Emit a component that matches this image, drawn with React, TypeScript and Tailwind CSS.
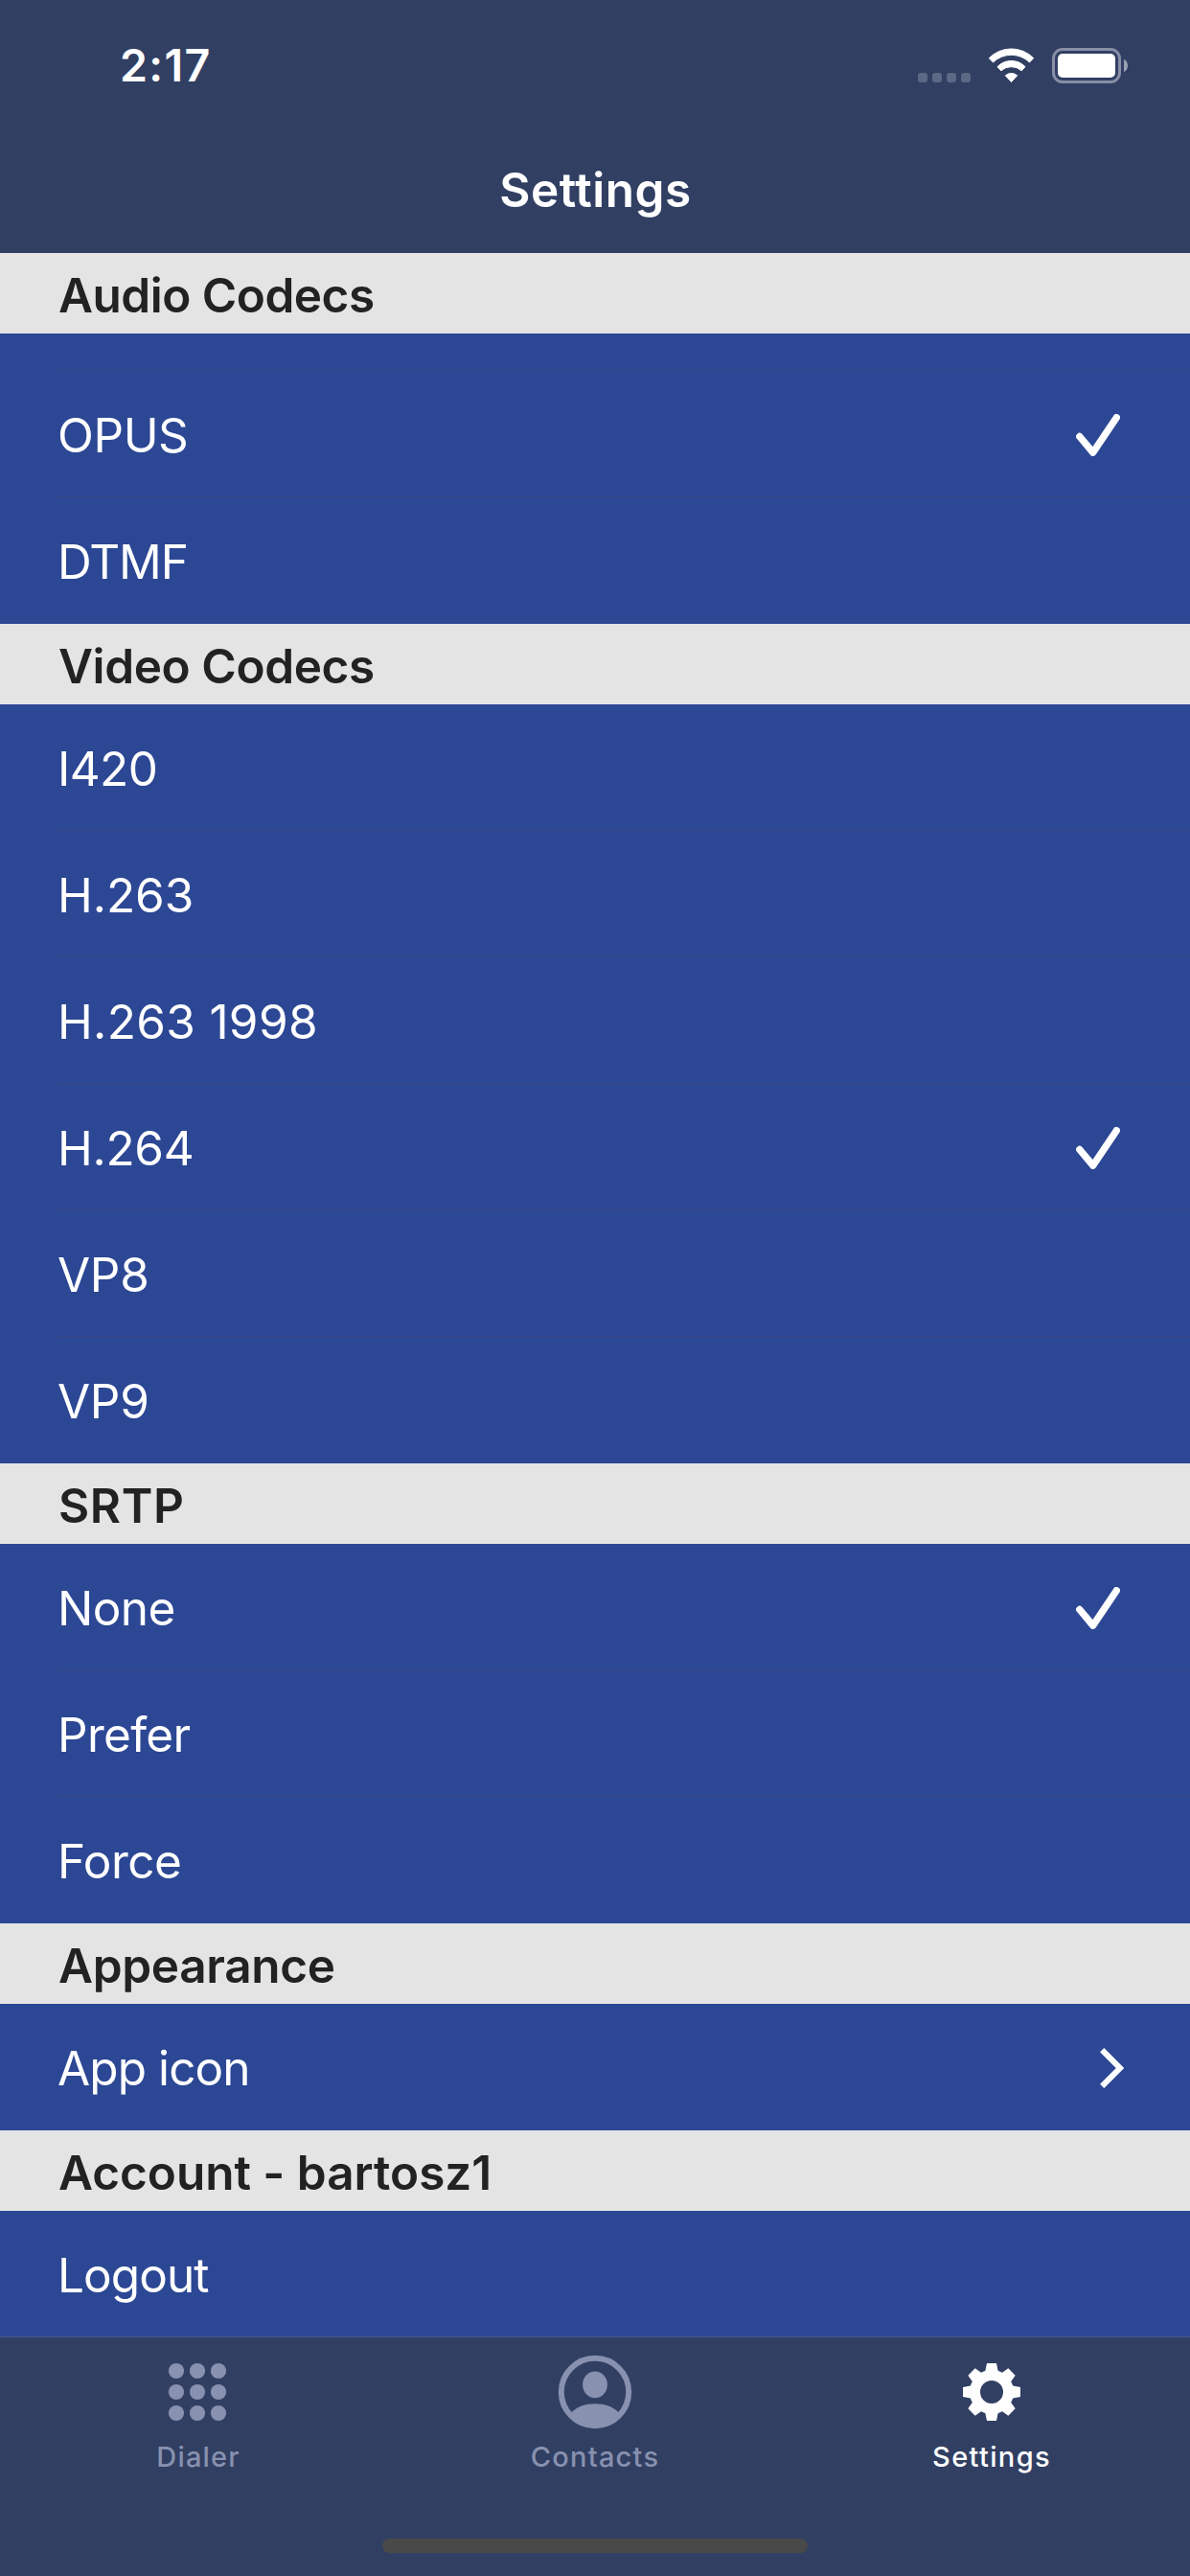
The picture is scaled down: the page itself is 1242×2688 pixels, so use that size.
import type { ReactNode } from "react";

type Accessory = "check" | "chevron";
type Item = { label: string; tracking: string; accessory?: Accessory };
type Section = { title: string; tracking: string; clipped?: boolean; items: Item[] };

const sections: Section[] = [
  {
    title: "Audio Codecs",
    tracking: "tracking-[-0.5px]",
    clipped: true,
    items: [
      { label: "OPUS", tracking: "tracking-[-0.4px]", accessory: "check" },
      { label: "DTMF", tracking: "tracking-[-1.07px]" },
    ],
  },
  {
    title: "Video Codecs",
    tracking: "tracking-[-0.4px]",
    items: [
      { label: "I420", tracking: "tracking-[-0.6px]" },
      { label: "H.263", tracking: "tracking-[-0.05px]" },
      { label: "H.263 1998", tracking: "tracking-[0.33px]" },
      { label: "H.264", tracking: "tracking-[-0.3px]", accessory: "check" },
      { label: "VP8", tracking: "tracking-[-0.3px]" },
      { label: "VP9", tracking: "tracking-[-0.3px]" },
    ],
  },
  {
    title: "SRTP",
    tracking: "tracking-[0.6px]",
    items: [
      { label: "None", tracking: "tracking-[-0.6px]", accessory: "check" },
      { label: "Prefer", tracking: "tracking-[-0.72px]" },
      { label: "Force", tracking: "tracking-[-0.5px]" },
    ],
  },
  {
    title: "Appearance",
    tracking: "tracking-[-0.33px]",
    items: [{ label: "App icon", tracking: "tracking-[-0.9px]", accessory: "chevron" }],
  },
  {
    title: "Account - bartosz1",
    tracking: "tracking-[-0.03px]",
    items: [{ label: "Logout", tracking: "tracking-[-0.95px]" }],
  },
];

function CheckIcon() {
  return (
    <svg className="mr-[73px] h-[44px] w-[46px]" viewBox="0 0 46 44" fill="none">
      <path d="M3.8 23.5 17.7 40.2 42.3 3.7" stroke="white" strokeWidth="7.4" strokeLinecap="round" strokeLinejoin="round" />
    </svg>
  );
}

function ChevronIcon() {
  return (
    <svg className="mr-[69px] h-[42px] w-[25px]" viewBox="0 0 25 42" fill="none">
      <path d="M2.2 2.2 20.9 21 2.2 39.8" stroke="white" strokeWidth="6" />
    </svg>
  );
}

function WifiIcon() {
  return (
    <svg className="h-[37px] w-[49px]" viewBox="627 147 147 111" fill="white" stroke="white" strokeWidth="3" strokeLinejoin="round">
      <path d="M631 179A97.500 97.500 0 0 1 770 179L757.500 192A82 82 0 0 0 643.500 192Z" />
      <path d="M657 206A60 60 0 0 1 744 206L732.500 218.500A47 47 0 0 0 668.500 218.500Z" />
      <path d="M682 233.500A28 28 0 0 1 719 233.500L700.500 253.500Z" />
    </svg>
  );
}

function Battery() {
  return (
    <div className="flex items-center gap-[3px]">
      <div className="h-[37px] w-[72px] rounded-[11px] border-[3px] border-[#878ea5] p-[3px]">
        <div className="h-full w-full rounded-[5px] bg-white" />
      </div>
      <svg className="h-[13px] w-[4px]" viewBox="0 0 4 13" fill="#9ba1b4">
        <path d="M0 0C5.300 2 5.300 11 0 13Z" />
      </svg>
    </div>
  );
}

function DialerIcon() {
  const steps = [30, 52, 74];
  return (
    <svg className="h-[78px] w-[106px]" viewBox="0 0 106 78" fill="#8891af">
      {steps.map((cx) => steps.map((y) => <circle key={`${cx}-${y}`} cx={cx} cy={y - 13} r="8.1" />))}
    </svg>
  );
}

function ContactsIcon() {
  return (
    <svg className="h-[78px] w-[78px]" viewBox="0 0 78 78" fill="#8891af">
      <circle cx="39" cy="39" r="35.2" fill="none" stroke="#8891af" strokeWidth="6" />
      <ellipse cx="39" cy="31.400" rx="12.900" ry="13.900" />
      <path d="M14.300 60.600C20 54.200 29 51.300 39 51.300S58 54.200 63.700 60.600C58 70 49 75 39 75S20 70 14.300 60.600Z" />
    </svg>
  );
}

function GearIcon() {
  return (
    <svg className="h-[78px] w-[78px]" viewBox="-9 -9 78 78" fill="white" fillRule="evenodd">
      <path d="M25 0H35L36.600 7.800 41 9.800 47.300 5.300 54.700 12.700 50.200 19 52.200 23.400 60 25V35L52.200 36.600 50.200 41 54.700 47.300 47.300 54.700 41 50.200 36.600 52.200 35 60H25L23.400 52.200 19 50.200 12.700 54.700 5.300 47.300 9.800 41 7.800 36.600 0 35V25L7.800 23.400 9.800 19 5.300 12.700 12.700 5.300 19 9.800 23.400 7.800ZM30 18A12 12 0 1 0 30 42A12 12 0 1 0 30 18Z" />
    </svg>
  );
}

function Row({ item, last }: { item: Item; last: boolean }) {
  return (
    <div className="h-[132px] pl-[60px]">
      <div
        className={`flex h-full items-center justify-between border-b pt-[3px] text-[49.5px] leading-none text-white ${
          last ? "border-transparent" : "border-[#35457c]"
        }`}
      >
        <span className={`pt-[2px] ${item.tracking}`}>{item.label}</span>
        {item.accessory === "check" && <CheckIcon />}
        {item.accessory === "chevron" && <ChevronIcon />}
      </div>
    </div>
  );
}

function Tab({ icon, label, tracking, active }: { icon: ReactNode; label: string; tracking: string; active?: boolean }) {
  return (
    <div className="flex flex-1 flex-col items-center pt-[18px]">
      {icon}
      <span
        className={`mt-[11px] text-[29px] leading-[35px] font-[450] ${tracking} ${active ? "text-white" : "text-[#8891af]"}`}
      >
        {label}
      </span>
    </div>
  );
}

export default function App() {
  return (
    <div className="flex h-[2688px] w-[1242px] flex-col overflow-hidden bg-[#2c4794] font-['Inter','Liberation_Sans',sans-serif]">
      <header className="h-[264px] shrink-0 bg-[#313f63] text-white">
        <div className="flex h-[132px] items-center justify-between pt-[4px] pr-[65px] pl-[125px]">
          <span className="text-[46.5px] leading-none font-[570] tracking-[1.35px]">2:17</span>
          <div className="flex items-center gap-[18px]">
            <div className="flex h-[36px] items-end gap-[5px]">
              {[0, 1, 2, 3].map((i) => (
                <span key={i} className="h-[10px] w-[10px] rounded-[3px] bg-[#5d6885]" />
              ))}
            </div>
            <WifiIcon />
            <Battery />
          </div>
        </div>
        <h1 className="flex h-[132px] items-center justify-center pt-[2px] pl-[1px] text-[49.5px] leading-none font-[570] tracking-[0.55px]">
          Settings
        </h1>
      </header>

      <main className="shrink-0">
        {sections.map((section) => (
          <section key={section.title}>
            <h2
              className={`flex h-[84px] items-center bg-[#e4e4e4] pt-[6px] pl-[61px] text-[49.5px] leading-none font-[590] text-[#222222] ${section.tracking}`}
            >
              {section.title}
            </h2>
            {section.clipped && <div className="ml-[60px] h-[39px] border-b border-[#35457c]" />}
            {section.items.map((item, i) => (
              <Row key={item.label} item={item} last={i === section.items.length - 1} />
            ))}
          </section>
        ))}
      </main>

      <nav className="-mt-px flex h-[250px] shrink-0 flex-col items-center justify-between border-t border-[#4a598c] bg-[#313f63] pb-[24px]">
        <div className="flex w-full">
          <Tab icon={<DialerIcon />} label="Dialer" tracking="tracking-[1.2px]" />
          <Tab icon={<ContactsIcon />} label="Contacts" tracking="tracking-[1.25px]" />
          <Tab icon={<GearIcon />} label="Settings" tracking="tracking-[1.35px]" active />
        </div>
        <div className="h-[15px] w-[444px] rounded-full bg-[#494949]" />
      </nav>
    </div>
  );
}
